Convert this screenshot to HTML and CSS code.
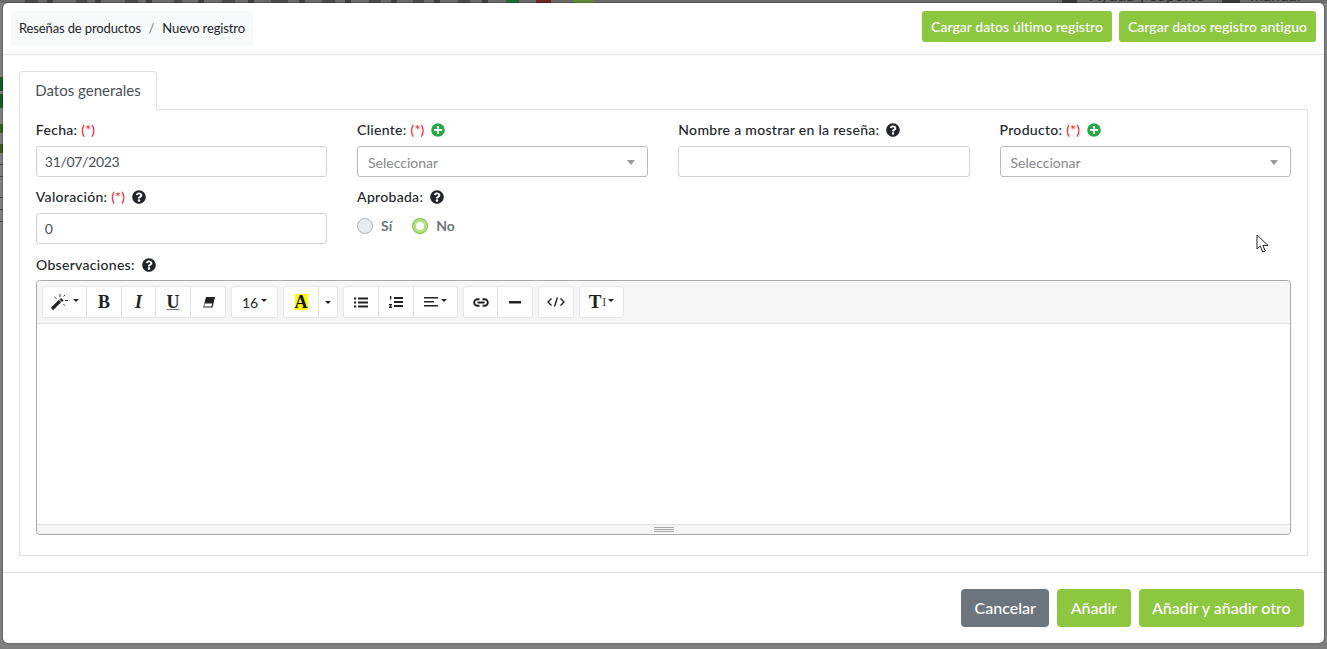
FILE: index.html
```html
<!DOCTYPE html>
<html lang="es">
<head>
<meta charset="utf-8">
<title>Nuevo registro</title>
<link rel="stylesheet" href="styles.css">
</head>
<body>
<svg width="0" height="0" class="defs">
  <symbol id="q" viewBox="0 0 512 512"><path d="M504 256c0 136.997-111.043 248-248 248S8 392.997 8 256C8 119.083 119.043 8 256 8s248 111.083 248 248zM262.655 90c-54.497 0-89.255 22.957-116.549 63.758-3.536 5.286-2.353 12.415 2.715 16.258l34.699 26.31c5.205 3.947 12.621 3.008 16.665-2.122 17.864-22.658 30.113-35.797 57.303-35.797 20.429 0 45.698 13.148 45.698 32.958 0 14.976-12.363 22.667-32.534 33.976C247.128 238.528 216 254.941 216 296v4c0 6.627 5.373 12 12 12h56c6.627 0 12-5.373 12-12v-1.333c0-28.462 83.186-29.647 83.186-106.667 0-58.002-60.165-102-116.531-102zM256 338c-25.365 0-46 20.635-46 46 0 25.364 20.635 46 46 46s46-20.636 46-46c0-25.365-20.635-46-46-46z"/></symbol>
  <symbol id="plus" viewBox="0 0 14 14"><circle cx="7" cy="7" r="6.8" fill="#28a745"/><path d="M6 3h2v3h3v2H8v3H6V8H3V6h3z" fill="#fff"/></symbol>
</svg>
<div class="backdrop-bits">
  <div class="top-strip"></div>
  <span class="behind-text t1">Ayuda y soporte</span><span class="behind-text t2">manual</span>
  <i class="side s1"></i><i class="side s2"></i><i class="side s3"></i><i class="side s4"></i>
  <i class="tick k1"></i><i class="tick k2"></i><i class="tick k3"></i><i class="tick k4"></i><i class="tick k5"></i>
</div>
<main class="modal">
  <header class="modal-head">
    <nav class="crumbs"><span>Reseñas de productos</span><span class="sep">/</span><span>Nuevo registro</span></nav>
    <div class="head-actions">
      <button class="btn-green small">Cargar datos último registro</button>
      <button class="btn-green small">Cargar datos registro antiguo</button>
    </div>
  </header>
  <section class="modal-body">
    <div class="tabs"><div class="tab">Datos generales</div></div>
    <div class="panel">
      <div class="grid">
        <div class="field">
          <label class="lab">Fecha: <em>(*)</em></label>
          <input class="ctl inp" value="31/07/2023">
        </div>
        <div class="field">
          <label class="lab">Cliente: <em>(*)</em> <svg class="ic add"><use href="#plus"/></svg></label>
          <div class="ctl sel">Seleccionar<i class="caret"></i></div>
        </div>
        <div class="field">
          <label class="lab">Nombre a mostrar en la reseña: <svg class="ic qm"><use href="#q"/></svg></label>
          <input class="ctl inp" value="">
        </div>
        <div class="field">
          <label class="lab">Producto: <em>(*)</em> <svg class="ic add"><use href="#plus"/></svg></label>
          <div class="ctl sel">Seleccionar<i class="caret"></i></div>
        </div>
        <div class="field">
          <label class="lab">Valoración: <em>(*)</em> <svg class="ic qm"><use href="#q"/></svg></label>
          <input class="ctl inp" value="0">
        </div>
        <div class="field">
          <label class="lab">Aprobada: <svg class="ic qm"><use href="#q"/></svg></label>
          <div class="radios">
            <span class="radio"><i class="dot"></i>Sí</span>
            <span class="radio"><i class="dot on"></i>No</span>
          </div>
        </div>
      </div>
      <label class="lab obs">Observaciones: <svg class="ic qm"><use href="#q"/></svg></label>
      <div class="editor">
        <div class="toolbar">
          <div class="grp">
            <button class="tb w44"><svg width="19" height="16" viewBox="0 0 19 16"><path d="M1 15L9 7" stroke="#222" stroke-width="3.200" fill="none"/><path d="M8.500 5.500l2.500 2.500 1.500-1.500-2.500-2.500z" fill="#222"/><path d="M9 0v3M3.500 3l2 1.500M14 1l-1.500 1.500M14 6.500h3M12.500 10l1 1.500" stroke="#333" stroke-width="1" fill="none"/></svg><i class="mini"></i></button>
            <button class="tb w35 serif">B</button>
            <button class="tb w34 serif it">I</button>
            <button class="tb w35 serif und">U</button>
            <button class="tb w34"><svg width="13" height="11" viewBox="0 0 13 11"><path d="M4 0h9l-2.500 10.500H1.200z" fill="#222"/><path d="M2.800 6.500h7.400l-.8 3H2.200z" fill="#fff"/></svg></button>
          </div>
          <div class="grp"><button class="tb w45 num">16<i class="mini"></i></button></div>
          <div class="grp">
            <button class="tb w35"><span class="hl">A</span></button>
            <button class="tb w18"><i class="mini solo"></i></button>
          </div>
          <div class="grp">
            <button class="tb w35"><svg width="14" height="11" viewBox="0 0 14 11"><path d="M4 0.500h10v2H4zM4 4.500h10v2H4zM4 8.500h10v2H4z" fill="#222"/><path d="M0 0.500h2.200v2H0zM0 4.500h2.200v2H0zM0 8.500h2.200v2H0z" fill="#222"/></svg></button>
            <button class="tb w35"><svg width="14" height="12" viewBox="0 0 14 12"><path d="M5 1h9v2H5zM5 5h9v2H5zM5 9h9v2H5z" fill="#222"/><path d="M1 0h1.300v3.500H1zM0 8h3v1l-1.500 1.500H3V12H0v-1l1.500-1.500H0z" fill="#222"/></svg></button>
            <button class="tb w43"><svg width="14" height="10" viewBox="0 0 14 10"><path d="M0 0h14v1.500H0zM0 4h10v1.500H0zM0 8h14v1.500H0z" fill="#222"/></svg><i class="mini"></i></button>
          </div>
          <div class="grp">
            <button class="tb w34"><svg width="16" height="9" viewBox="0 0 16 9"><path d="M6.500 1.200H4.500a3.300 3.300 0 0 0 0 6.600h2M9.500 1.200h2a3.300 3.300 0 0 1 0 6.600h-2M4.500 4.500h7" stroke="#222" stroke-width="1.900" fill="none"/></svg></button>
            <button class="tb w34"><svg width="12" height="3" viewBox="0 0 12 3"><path d="M0 0h12v2.500H0z" fill="#222"/></svg></button>
          </div>
          <div class="grp"><button class="tb w34"><svg width="18" height="10" viewBox="0 0 18 10"><path d="M4.500 1.500L1 5l3.500 3.500M13.500 1.500L17 5l-3.500 3.500M10.500 0.500L7.500 9.500" stroke="#222" stroke-width="1.400" fill="none"/></svg></button></div>
          <div class="grp"><button class="tb w43 serif tt">T<span class="cursorbar">I</span><i class="mini"></i></button></div>
        </div>
        <div class="edit-area"></div>
        <div class="status"><i class="grip"></i></div>
      </div>
    </div>
  </section>
  <footer class="modal-foot">
    <button class="btn-big grey">Cancelar</button>
    <button class="btn-big green">Añadir</button>
    <button class="btn-big green">Añadir y añadir otro</button>
  </footer>
</main>
<svg class="pointer" width="13" height="20" viewBox="0 0 13 20"><path d="M1 1v14l3.300-3 2.400 6 2.600-1-2.500-5.600H12z" fill="#fff" stroke="#222" stroke-width="1"/></svg>
</body>
</html>
```
FILE: styles.css
```css
* { box-sizing: border-box; }
html, body { height: 100%; }
body {
  margin: 0;
  padding: 3px;
  height: 649px;
  overflow: hidden;
  background: #7f7f7f;
  font-family: Lato, "Liberation Sans", sans-serif;
  color: #212529;
  position: relative;
}
.defs { position: absolute; }
.backdrop-bits { position: absolute; inset: 0; overflow: hidden; }
.top-strip {
  position: absolute;
  left: 0;
  right: 0;
  top: 0;
  height: 3px;
  background-color: #6b6b6b;
  background-repeat: no-repeat;
  background-image:
    linear-gradient(#4a4a4a, #4a4a4a), linear-gradient(#3f3f3f, #3f3f3f),
    linear-gradient(#4a4a4a, #4a4a4a), linear-gradient(#3f3f3f, #3f3f3f),
    linear-gradient(#4a4a4a, #4a4a4a), linear-gradient(#3f3f3f, #3f3f3f),
    linear-gradient(#4a4a4a, #4a4a4a), linear-gradient(#3f3f3f, #3f3f3f),
    linear-gradient(#4a4a4a, #4a4a4a), linear-gradient(#3f3f3f, #3f3f3f),
    linear-gradient(#4a4a4a, #4a4a4a), linear-gradient(#3f3f3f, #3f3f3f),
    linear-gradient(#4a4a4a, #4a4a4a), linear-gradient(#3f3f3f, #3f3f3f),
    linear-gradient(#4a4a4a, #4a4a4a), linear-gradient(#3f3f3f, #3f3f3f),
    linear-gradient(#4a4a4a, #4a4a4a), linear-gradient(#3f3f3f, #3f3f3f),
    linear-gradient(#4a4a4a, #4a4a4a), linear-gradient(#3f3f3f, #3f3f3f),
    linear-gradient(#1f6b3a, #1f6b3a), linear-gradient(#6e2528, #6e2528), linear-gradient(#5f8a35, #5f8a35),
    linear-gradient(#3a3a3a, #3a3a3a), linear-gradient(#3a3a3a, #3a3a3a);
  background-size:
    13px 3px, 6px 3px, 11px 3px, 6px 3px, 13px 3px, 6px 3px, 8px 3px, 6px 3px, 13px 3px, 6px 3px,
    17px 3px, 6px 3px, 13px 3px, 6px 3px, 12px 3px, 6px 3px, 11px 3px, 6px 3px, 12px 3px, 6px 3px,
    13px 3px, 15px 3px, 19px 3px, 15px 3px, 18px 3px;
  background-position:
    25px 0, 47px 0, 76px 0, 95px 0, 125px 0, 146px 0, 174px 0, 198px 0, 222px 0, 248px 0,
    271px 0, 299px 0, 322px 0, 345px 0, 369px 0, 391px 0, 413px 0, 434px 0, 458px 0, 482px 0,
    506px 0, 536px 0, 574px 0, 1062px 0, 1222px 0;
}
.behind-text { position: absolute; top: -15px; font-size: 16px; color: #2e2e2e; }
.t1 { left: 1090px; }
.t2 { left: 1250px; }
.side { position: absolute; left: 0; width: 3px; }
.s1 { top: 77px; height: 14px; background: #145c28; }
.s2 { top: 94px; height: 14px; background: #145c28; }
.s3 { top: 124px; height: 9px; background: #3c5a1c; }
.s4 { top: 144px; height: 9px; background: #3c5a1c; }
.tick { position: absolute; left: 0; width: 3px; height: 1px; background: #444; }
.k1 { top: 164px; }
.k2 { top: 176px; }
.k3 { top: 197px; }
.k4 { top: 209px; }
.k5 { top: 221px; }

.modal {
  position: relative;
  width: 1321px;
  height: 640px;
  background: #fff;
  border-radius: 5px;
  box-shadow: 0 0 0 1px rgba(0, 0, 0, .2);
  display: flex;
  flex-direction: column;
}
.modal-head {
  height: 52px;
  border-bottom: 1px solid #dee2e6;
  padding: 8px 8px 0 8px;
  display: flex;
  justify-content: space-between;
  align-items: flex-start;
}
.crumbs {
  height: 35px;
  background: #f8f9fa;
  border-radius: 4px;
  padding: 0 8px 2px;
  display: flex;
  align-items: center;
  font-size: 13px;
  letter-spacing: -.13px;
  color: #212529;
  width: 242px;
  white-space: nowrap;
}
.sep { color: #6c757d; margin: 0 8px 0 7.5px; }
.head-actions { display: flex; gap: 7px; }
.btn-green {
  border: 0;
  background: #8dc63f;
  color: #fff;
  font: 500 14px Lato, sans-serif;
  letter-spacing: .03px;
  border-radius: 3px;
  white-space: nowrap;
}
.small { height: 31px; padding: 0 9px; }
.modal-body { flex: 1; padding: 16px; display: flex; flex-direction: column; }
.tabs { display: flex; height: 39px; position: relative; z-index: 1; }
.tab {
  width: 138px;
  height: 39px;
  border: 1px solid #dee2e6;
  border-bottom-color: #fff;
  border-radius: 4px 4px 0 0;
  font-size: 15px;
  color: #495057;
  text-align: center;
  line-height: 37px;
  background: #fff;
}
.panel {
  border: 1px solid #dee2e6;
  margin-top: -1px;
  flex: 1;
  padding: 11px 16px 20px 16px;
}
.grid {
  display: grid;
  grid-template-columns: repeat(4, 1fr);
  column-gap: 30px;
  row-gap: 10px;
  margin: 0 .2px 0 -.2px;
}
.field { display: flex; flex-direction: column; min-height: 57px; }
.lab {
  display: block;
  font-size: 14px;
  font-weight: 500;
  letter-spacing: .3px;
  line-height: 17px;
  height: 17px;
  margin-bottom: 8px;
  color: #212529;
  white-space: pre;
}
.lab em { font-style: normal; color: #f5222d; letter-spacing: .15px; }
.ic { display: inline-block; vertical-align: -2px; }
.qm { width: 14px; height: 14px; fill: #212529; margin-left: 3px; }
.add { width: 14px; height: 14px; margin-left: 3px; }
.ctl {
  height: 31px;
  border: 1px solid #ced4da;
  border-radius: 3px;
  padding: 0 8px;
  font: 14px Lato, sans-serif;
  color: #495057;
  background: #fff;
  width: 100%;
}
.inp { letter-spacing: -.3px; }
.sel {
  color: #888;
  display: flex;
  align-items: center;
  justify-content: space-between;
  padding: 2px 12px 0 10px;
  border-color: #b8bdc2;
}
.caret { width: 0; height: 0; border: 4px solid transparent; border-top: 5px solid #999; border-bottom: 0; }
.radios { display: flex; gap: 19px; height: 31px; padding-top: 4px; }
.radio { display: flex; align-items: center; height: 17px; gap: 8px; font-size: 14px; font-weight: 700; color: #6c757d; }
.radio + .radio { margin-left: 1px; }
.dot { width: 16px; height: 16px; border-radius: 50%; background: #e9ecef; border: 1px solid #adb5bd; display: block; }
.dot.on { background: #fff; border: 4px solid #b6dd88; outline: 1px solid #8dc63f; outline-offset: -1px; }
.obs { margin-top: 11px; margin-bottom: 7px; }
.editor {
  height: 255px;
  border: 1px solid #a9a9a9;
  border-radius: 4px;
  display: flex;
  flex-direction: column;
}
.toolbar {
  height: 43px;
  background: #f5f5f5;
  border-bottom: 1px solid #dee2e6;
  padding: 5px 0 0 5px;
  display: flex;
  gap: 5px;
  border-radius: 4px 4px 0 0;
}
.grp { display: flex; height: 32px; background: #fff; border: 1px solid #e2e6ea; border-radius: 3px; }
.tb {
  border: 0;
  border-right: 1px solid #dee2e6;
  background: transparent;
  height: 100%;
  padding: 0;
  display: flex;
  align-items: center;
  justify-content: center;
  gap: 2px;
  color: #212529;
  font-size: 14px;
  font-family: Lato, sans-serif;
}
.tb:last-child { border-right: 0; }
.w44 { width: 44px; }
.w43 { width: 43px; }
.w45 { width: 45px; }
.w35 { width: 35px; }
.w34 { width: 34px; }
.w18 { width: 18px; }
.serif { font-family: "Liberation Serif", serif; font-weight: 700; font-size: 18px; color: #222; }
.it { font-style: italic; }
.und { text-decoration: underline; text-decoration-color: #777; }
.num { font-family: Lato, sans-serif; font-weight: 400; font-size: 14px; }
.hl { background: #ff0; font: 700 18px/16px "Liberation Serif", serif; width: 13px; height: 16px; display: block; color: #111; }
.mini { display: inline-block; width: 0; height: 0; border: 3px solid transparent; border-top: 3px solid #222; border-bottom: 0; margin-left: 1px; margin-top: -3px; }
.mini.solo { margin: 0; }
.tt { font-size: 19px; gap: 0; }
.cursorbar { font-size: 12px; font-weight: 400; margin: 0 1px; color: #444; }
.edit-area { flex: 1; background: #fff; }
.status { height: 10px; background: #f5f5f5; border-top: 1px solid #dee2e6; display: flex; justify-content: center; align-items: center; border-radius: 0 0 4px 4px; }
.grip { width: 20px; height: 5px; border-top: 1px solid #a9a9a9; border-bottom: 1px solid #a9a9a9; background: linear-gradient(#a9a9a9, #a9a9a9) center / 100% 1px no-repeat; }
.modal-foot {
  height: 71px;
  border-top: 1px solid #dee2e6;
  display: flex;
  justify-content: flex-end;
  gap: 8px;
  padding: 16px 20px 0 0;
}
.btn-big {
  height: 38px;
  border: 0;
  border-radius: 4px;
  font: 500 16px Lato, sans-serif;
  color: #fff;
  padding: 0 13.4px 2px;
}
.grey { background: #6c757d; }
.green { background: #8dc63f; }
.pointer { position: absolute; left: 1256px; top: 234px; }
```
